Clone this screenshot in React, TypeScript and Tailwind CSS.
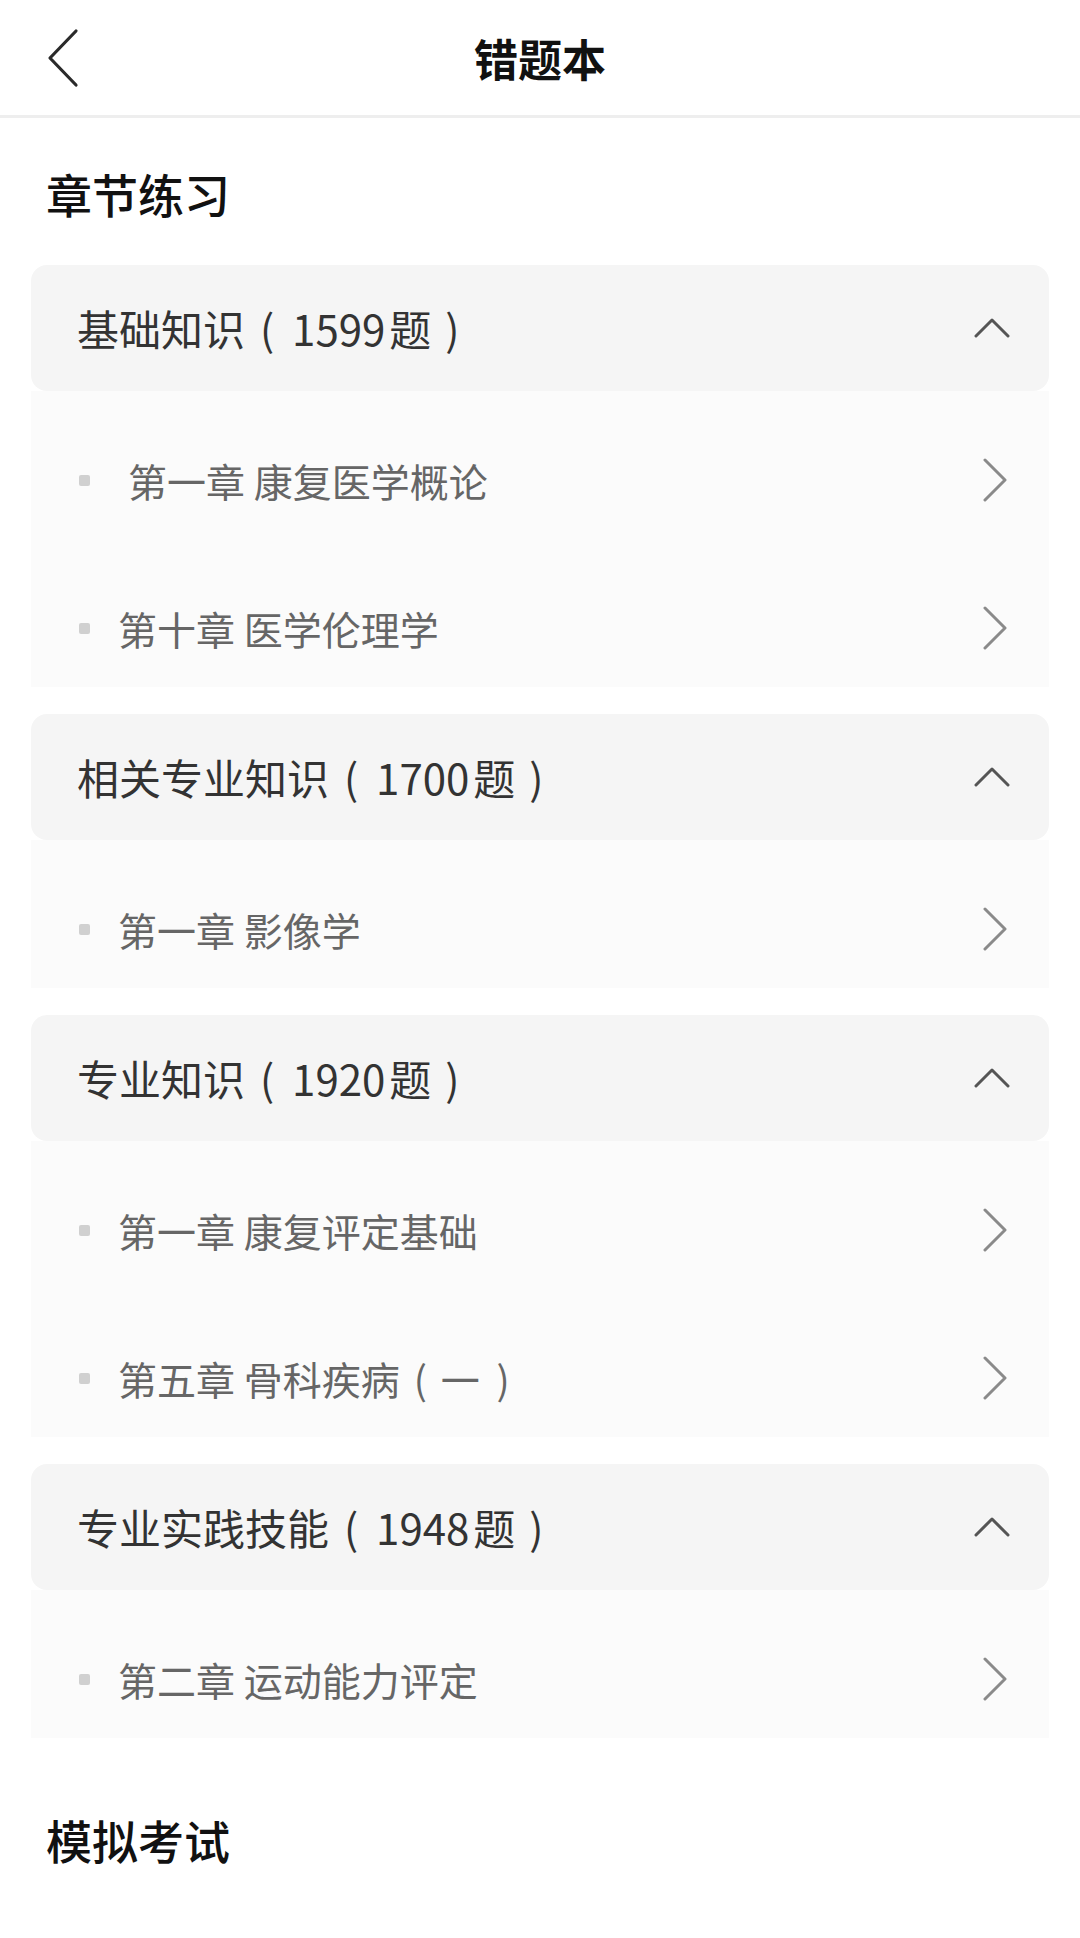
import React from "react";

type Chapter = { name: string; lead?: boolean };
type Group = { title: string; count: number; chapters: Chapter[] };

const groups: Group[] = [
  {
    title: "基础知识",
    count: 1599,
    chapters: [{ name: "第一章 康复医学概论", lead: true }, { name: "第十章 医学伦理学" }],
  },
  { title: "相关专业知识", count: 1700, chapters: [{ name: "第一章 影像学" }] },
  {
    title: "专业知识",
    count: 1920,
    chapters: [{ name: "第一章 康复评定基础" }, { name: "第五章 骨科疾病（一）" }],
  },
  { title: "专业实践技能", count: 1948, chapters: [{ name: "第二章 运动能力评定" }] },
];

const withParens = (s: string) =>
  s.split(/([（）])/).map((part, i) => {
    if (part === "（")
      return (
        <span key={i} className="inline-block w-[1.05em] text-center">
          (
        </span>
      );
    if (part === "）")
      return (
        <span key={i} className="inline-block w-[1.2em] text-center">
          )
        </span>
      );
    return <React.Fragment key={i}>{part}</React.Fragment>;
  });

const BackIcon = () => (
  <svg width="32" height="60" viewBox="0 0 32 60" fill="none">
    <path d="M29 3 L3 30 L29 57" stroke="#2a2a2a" strokeWidth="3.2" strokeLinecap="round" strokeLinejoin="round" />
  </svg>
);

const UpIcon = () => (
  <svg width="36" height="20" viewBox="0 0 36 20" fill="none">
    <path d="M2 18 L18 2 L34 18" stroke="#555" strokeWidth="3" strokeLinecap="round" strokeLinejoin="round" />
  </svg>
);

const RightIcon = () => (
  <svg width="26" height="44" viewBox="0 0 26 44" fill="none">
    <path d="M3 2 L23 22 L3 42" stroke="#8a8a8a" strokeWidth="3" strokeLinecap="round" strokeLinejoin="round" />
  </svg>
);

const ChapterRow = ({ chapter }: { chapter: Chapter }) => (
  <div className="flex h-[118px] items-center justify-between pl-[48px] pr-[41px]">
    <div className="flex items-center">
      <span className="mr-[28px] h-[11px] w-[11px] rounded-[2px] bg-[#d0d0d0]" />
      <span className={`text-[39px] leading-none text-[#666] ${chapter.lead ? "pl-[10px]" : ""}`}>
        {withParens(chapter.name)}
      </span>
    </div>
    <RightIcon />
  </div>
);

const GroupCard = ({ group }: { group: Group }) => (
  <div>
    <div className="flex h-[126px] items-center justify-between rounded-[16px] bg-[#f5f5f5] pl-[46px] pr-[39px]">
      <span className="text-[42px] leading-none text-[#333]">
        {group.title}
        <span className="inline-block w-[1.05em] text-center">(</span>
        <span className="pl-[3px]">{group.count}</span>
        <span className="pl-[4px]">题</span>
        <span className="inline-block w-[1em] text-center">)</span>
      </span>
      <UpIcon />
    </div>
    <div className="flex flex-col gap-[30px] bg-[#fbfbfb] pt-[30px]">
      {group.chapters.map((c) => (
        <ChapterRow key={c.name} chapter={c} />
      ))}
    </div>
  </div>
);

export default function App() {
  return (
    <div className="min-h-[1938px] w-[1080px] bg-white font-['Noto_Sans_CJK_SC','Noto_Sans',sans-serif]">
      <header className="grid h-[118px] grid-cols-[1fr_auto_1fr] items-center border-b-[3px] border-[#eeeeee]">
        <div className="pl-[47px]">
          <BackIcon />
        </div>
        <h1 className="text-[44px] font-bold leading-none text-[#111]">错题本</h1>
        <div />
      </header>

      <h2 className="px-[46px] pt-[43px] text-[46px] font-medium leading-[64px] text-[#111]">章节练习</h2>

      <div className="mt-[40px] flex flex-col gap-[27px] px-[31px]">
        {groups.map((g) => (
          <GroupCard key={g.title} group={g} />
        ))}
      </div>

      <h2 className="mt-[69px] px-[46px] text-[46px] font-medium leading-[64px] text-[#111]">模拟考试</h2>
    </div>
  );
}
